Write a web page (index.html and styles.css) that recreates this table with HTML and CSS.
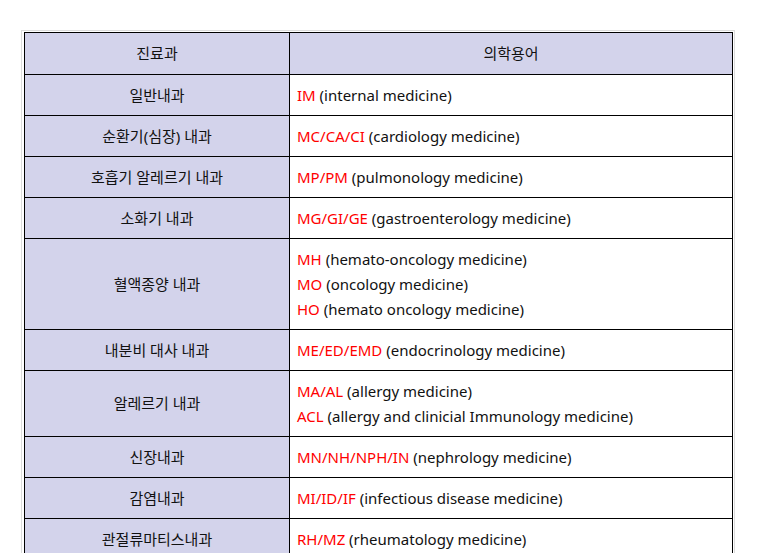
FILE: index.html
```html
<!DOCTYPE html>
<html lang="ko">
<head>
<meta charset="utf-8">
<link rel="stylesheet" href="styles.css">
</head>
<body>
<div class="frame">
<table class="terms">
<colgroup><col class="c1"><col class="c2"></colgroup>
<tr><th>진료과</th><th>의학용어</th></tr>
<tr><td class="dept">일반내과</td><td><span class="ab">IM</span> (internal medicine)</td></tr>
<tr><td class="dept">순환기(심장) 내과</td><td><span class="ab">MC/CA/CI</span> (cardiology medicine)</td></tr>
<tr><td class="dept">호흡기 알레르기 내과</td><td><span class="ab">MP/PM</span> (pulmonology medicine)</td></tr>
<tr><td class="dept">소화기 내과</td><td><span class="ab">MG/GI/GE</span> (gastroenterology medicine)</td></tr>
<tr><td class="dept">혈액종양 내과</td><td><span class="ab">MH</span> (hemato-oncology medicine)<br><span class="ab">MO</span> (oncology medicine)<br><span class="ab">HO</span> (hemato oncology medicine)</td></tr>
<tr><td class="dept">내분비 대사 내과</td><td><span class="ab">ME/ED/EMD</span> (endocrinology medicine)</td></tr>
<tr><td class="dept">알레르기 내과</td><td><span class="ab">MA/AL</span> (allergy medicine)<br><span class="ab">ACL</span> (allergy and clinicial Immunology medicine)</td></tr>
<tr><td class="dept">신장내과</td><td><span class="ab">MN/NH/NPH/IN</span> (nephrology medicine)</td></tr>
<tr><td class="dept">감염내과</td><td><span class="ab">MI/ID/IF</span> (infectious disease medicine)</td></tr>
<tr><td class="dept">관절류마티스내과</td><td><span class="ab">RH/MZ</span> (rheumatology medicine)</td></tr>
</table>
</div>
</body>
</html>
```
FILE: styles.css
```css
html, body {
  margin: 0;
  padding: 0;
  background: #fff;
}
body {
  padding: 30px 0 0 21px;
  font-family: "Noto Sans", "Noto Sans CJK KR", sans-serif;
  font-size: 15px;
  color: #111;
}
.frame {
  border: 1px solid #dcdcdc;
  padding: 1px 2px 2px 2px;
  box-sizing: border-box;
  width: 714px;
}
.terms {
  width: 708px;
  border-collapse: collapse;
  table-layout: fixed;
}
.c1 { width: 265px; }
.c2 { width: 443px; }
.terms th, .terms td {
  border: 1px solid #000;
  padding: 7.5px 7px;
  line-height: 25px;
  font-weight: normal;
  vertical-align: middle;
}
.terms th {
  background: #d3d3eb;
  text-align: center;
  padding-top: 8px;
  padding-bottom: 8px;
}
.terms td.dept {
  background: #d3d3eb;
  text-align: center;
}
.terms td {
  text-align: left;
}
.ab {
  color: #ff0000;
}
```
